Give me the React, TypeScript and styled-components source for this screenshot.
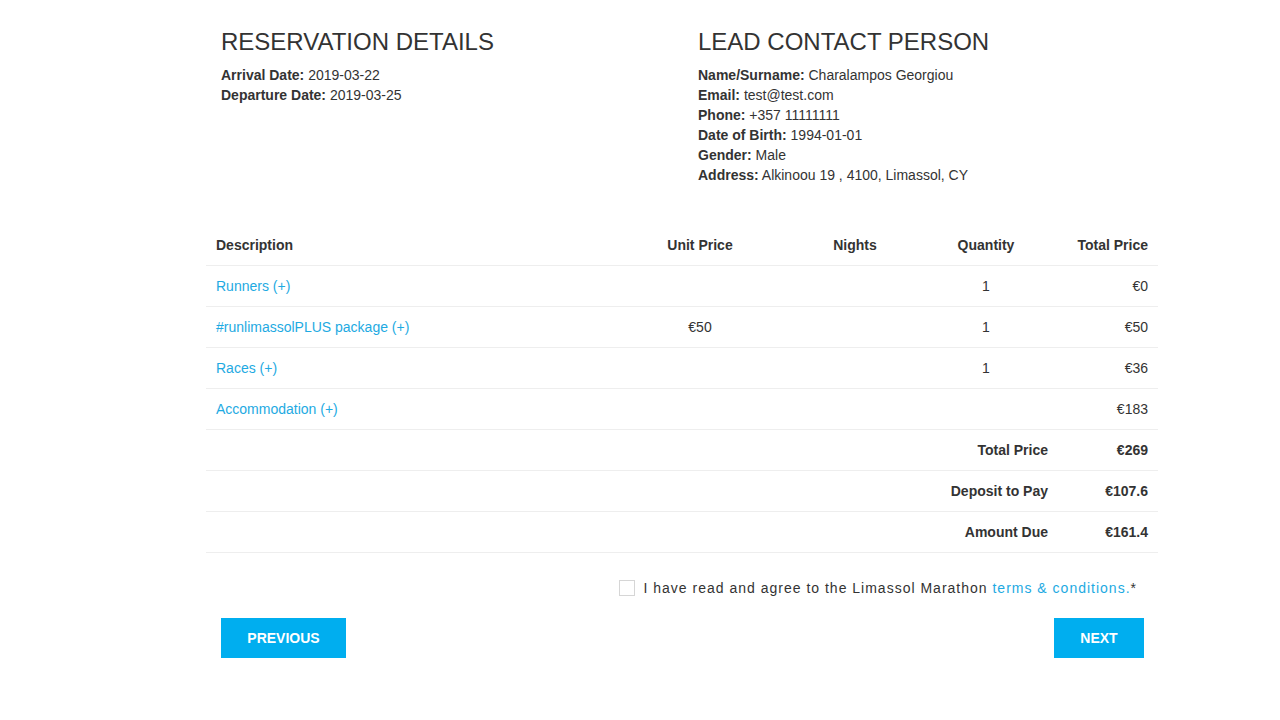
import React from "react";
import styled, { createGlobalStyle } from "styled-components";

const GlobalStyle = createGlobalStyle`
  html, body {
    margin: 0;
    padding: 0;
    background: #ffffff;
  }
  body {
    font-family: "Liberation Sans", Arial, sans-serif;
    font-size: 14px;
    line-height: 20px;
    color: #333333;
  }
`;

const Page = styled.div`
  width: 952px;
  margin-left: 206px;
  padding-top: 29px;
`;

const InfoRow = styled.div`
  display: grid;
  grid-template-columns: 477px 1fr;
`;

const InfoCol = styled.div`
  padding: 0 15px;
`;

const Heading = styled.h3`
  margin: 0 0 10px;
  font-size: 24px;
  line-height: 26px;
  font-weight: 400;
  color: #333333;
`;

const InfoLine = styled.div`
  font-size: 14px;
  line-height: 20px;
  & b {
    font-weight: 700;
  }
`;

const Table = styled.div`
  margin-top: 40px;
`;

const Row = styled.div`
  display: grid;
  grid-template-columns: 398px 192px 118px 144px 100px;
  border-bottom: 1px solid #eeeeee;
`;

const Cell = styled.div<{ $align?: "left" | "center" | "right"; $bold?: boolean; $span?: number }>`
  padding: 10px;
  line-height: 20px;
  text-align: ${(p) => p.$align || "left"};
  font-weight: ${(p) => (p.$bold ? 700 : 400)};
  ${(p) => (p.$span ? `grid-column: span ${p.$span};` : "")}
`;

const Link = styled.a`
  color: #1eaae2;
  text-decoration: none;
  cursor: pointer;
`;

const Agree = styled.div`
  display: flex;
  justify-content: flex-end;
  align-items: center;
  margin-top: 25px;
  padding-right: 21px;
`;

const Box = styled.span`
  width: 14px;
  height: 14px;
  border: 1px solid #d6d6d6;
  background: #ffffff;
  margin-right: 9px;
  flex-shrink: 0;
`;

const AgreeText = styled.span`
  letter-spacing: 1px;
  line-height: 20px;
`;

const Buttons = styled.div`
  display: flex;
  justify-content: space-between;
  margin-top: 20px;
  padding: 0 14px 0 15px;
`;

const Button = styled.button<{ $width: number }>`
  width: ${(p) => p.$width}px;
  height: 40px;
  border: none;
  background: #00aeef;
  color: #ffffff;
  font-family: "Liberation Sans", Arial, sans-serif;
  font-size: 14px;
  font-weight: 700;
  text-transform: uppercase;
  cursor: pointer;
  padding: 0;
`;

const items = [
  { name: "Runners (+)", unit: "", nights: "", qty: "1", total: "€0" },
  { name: "#runlimassolPLUS package (+)", unit: "€50", nights: "", qty: "1", total: "€50" },
  { name: "Races (+)", unit: "", nights: "", qty: "1", total: "€36" },
  { name: "Accommodation (+)", unit: "", nights: "", qty: "", total: "€183" },
];

const summary = [
  { label: "Total Price", value: "€269" },
  { label: "Deposit to Pay", value: "€107.6" },
  { label: "Amount Due", value: "€161.4" },
];

export default function App() {
  return (
    <>
      <GlobalStyle />
      <Page>
        <InfoRow>
          <InfoCol>
            <Heading>RESERVATION DETAILS</Heading>
            <InfoLine><b>Arrival Date:</b> 2019-03-22</InfoLine>
            <InfoLine><b>Departure Date:</b> 2019-03-25</InfoLine>
          </InfoCol>
          <InfoCol>
            <Heading>LEAD CONTACT PERSON</Heading>
            <InfoLine><b>Name/Surname:</b> Charalampos Georgiou</InfoLine>
            <InfoLine><b>Email:</b> test@test.com</InfoLine>
            <InfoLine><b>Phone:</b> +357 11111111</InfoLine>
            <InfoLine><b>Date of Birth:</b> 1994-01-01</InfoLine>
            <InfoLine><b>Gender:</b> Male</InfoLine>
            <InfoLine><b>Address:</b> Alkinoou 19 , 4100, Limassol, CY</InfoLine>
          </InfoCol>
        </InfoRow>

        <Table>
          <Row>
            <Cell $bold>Description</Cell>
            <Cell $bold $align="center">Unit Price</Cell>
            <Cell $bold $align="center">Nights</Cell>
            <Cell $bold $align="center">Quantity</Cell>
            <Cell $bold $align="right">Total Price</Cell>
          </Row>
          {items.map((it) => (
            <Row key={it.name}>
              <Cell><Link>{it.name}</Link></Cell>
              <Cell $align="center">{it.unit}</Cell>
              <Cell $align="center">{it.nights}</Cell>
              <Cell $align="center">{it.qty}</Cell>
              <Cell $align="right">{it.total}</Cell>
            </Row>
          ))}
          {summary.map((s) => (
            <Row key={s.label}>
              <Cell $bold $align="right" $span={4}>{s.label}</Cell>
              <Cell $bold $align="right">{s.value}</Cell>
            </Row>
          ))}
        </Table>

        <Agree>
          <Box />
          <AgreeText>
            I have read and agree to the Limassol Marathon <Link>terms &amp; conditions.</Link>*
          </AgreeText>
        </Agree>

        <Buttons>
          <Button $width={125}>Previous</Button>
          <Button $width={90}>Next</Button>
        </Buttons>
      </Page>
    </>
  );
}
